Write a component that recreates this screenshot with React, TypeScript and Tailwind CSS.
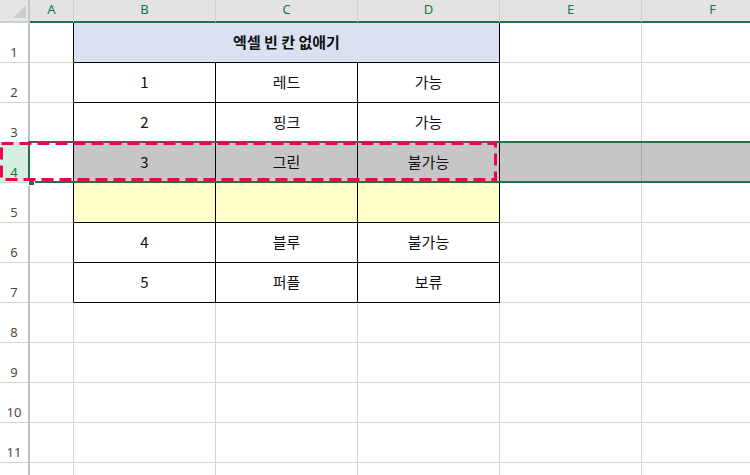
import React from 'react';

type Row = { no: number; b?: string; c?: string; d?: string };

const columns = [
  { key: 'A', w: 'w-[44px]' },
  { key: 'B', w: 'w-[142px]' },
  { key: 'C', w: 'w-[142px]' },
  { key: 'D', w: 'w-[142px]' },
  { key: 'E', w: 'w-[142px]' },
  { key: 'F', w: 'w-[142px]' },
];

const rows: Row[] = [
  { no: 1 },
  { no: 2, b: '1', c: '레드', d: '가능' },
  { no: 3, b: '2', c: '핑크', d: '가능' },
  { no: 4, b: '3', c: '그린', d: '불가능' },
  { no: 5 },
  { no: 6, b: '4', c: '블루', d: '불가능' },
  { no: 7, b: '5', c: '퍼플', d: '보류' },
  { no: 8 },
  { no: 9 },
  { no: 10 },
  { no: 11 },
  { no: 12 },
];

const cellText = "font-['Noto_Sans_CJK_KR',sans-serif] text-[15px] text-[#111]";

const DataCell: React.FC<{ row: number; text?: string }> = ({ row, text }) => {
  const inTable = row <= 7;
  const bg = row === 4 ? 'bg-[#c6c6c6]' : row === 5 ? 'bg-[#ffffcc]' : 'bg-white';
  const border = inTable ? 'border-r-black border-b-black' : 'border-r-[#d4d4d4] border-b-[#d4d4d4]';
  return (
    <div className={`flex h-[40px] items-center justify-center border-r border-b ${border} ${bg} ${cellText}`}>
      {text}
    </div>
  );
};

export default function App() {
  return (
    <div className="relative h-[475px] w-[750px] overflow-hidden bg-white">
      <div className="grid w-[784px] grid-cols-[30px_44px_142px_142px_142px_142px_142px]">
        {/* header row */}
        <div className="relative h-[23px] border-r-2 border-b-2 border-r-[#c8c8c8] border-b-[#d0d0d0] bg-[#e6e6e6]">
          <svg className="absolute left-0 top-0" width="28" height="21" viewBox="0 0 28 21">
            <polygon points="13,18 26,18 26,5" fill="#cdcdcd" />
          </svg>
        </div>
        {columns.map((c) => (
          <div
            key={c.key}
            className={`flex h-[23px] items-center justify-center border-r border-b-2 border-r-[#cfcfcf] border-b-[#217346] bg-[#e3e3e3] pb-[1px] font-['Noto_Sans',sans-serif] text-[13px] text-[#217346] ${c.w}`}
          >
            {c.key}
          </div>
        ))}

        {rows.map((r) => (
          <React.Fragment key={r.no}>
            <div
              className={`flex h-[40px] items-end justify-center border-r-2 border-b border-r-[#bfbfbf] border-b-[#d4d4d4] pb-[3px] font-['Noto_Sans',sans-serif] text-[13px] leading-none ${
                r.no === 4 ? 'bg-[#d3f0e0] text-[#217346]' : 'bg-white text-[#4a4a4a]'
              }`}
            >
              {/* row 12 is cut off by the window, its number falls below the edge */}
              {r.no < 12 ? r.no : null}
            </div>
            <div
              className={`h-[40px] border-r border-b border-b-[#d4d4d4] bg-white ${
                r.no <= 7 ? 'border-r-black' : 'border-r-[#d4d4d4]'
              }`}
            />
            {r.no === 1 ? (
              <div
                className={`col-span-3 flex h-[40px] items-center justify-center border-r border-b border-r-black border-b-black bg-[#d9e1f2] font-bold ${cellText}`}
              >
                엑셀 빈 칸 없애기
              </div>
            ) : (
              <>
                <DataCell row={r.no} text={r.b} />
                <DataCell row={r.no} text={r.c} />
                <DataCell row={r.no} text={r.d} />
              </>
            )}
            <div
              className={`h-[40px] border-r border-b border-b-[#d4d4d4] ${
                r.no === 4 ? 'border-r-[#a8a8a8] bg-[#c6c6c6]' : 'border-r-[#d4d4d4] bg-white'
              }`}
            />
            <div
              className={`h-[40px] border-r border-b border-b-[#d4d4d4] ${
                r.no === 4 ? 'border-r-[#a8a8a8] bg-[#c6c6c6]' : 'border-r-[#d4d4d4] bg-white'
              }`}
            />
          </React.Fragment>
        ))}
      </div>

      {/* selected row 4 */}
      <div className="pointer-events-none absolute left-[28px] right-0 top-[141px] h-[42px] border-y-2 border-l-2 border-[#217346]" />
      <div className="pointer-events-none absolute left-[28px] top-[179px] h-[7px] w-[7px] border border-white bg-[#217346]" />

      {/* marquee annotation */}
      <svg className="pointer-events-none absolute left-0 top-[142px]" width="498" height="40" viewBox="0 0 498 40">
        <rect x="1.5" y="1.5" width="494" height="36" fill="none" stroke="#e6094f" strokeWidth="3" strokeDasharray="12 6" />
      </svg>
    </div>
  );
}
